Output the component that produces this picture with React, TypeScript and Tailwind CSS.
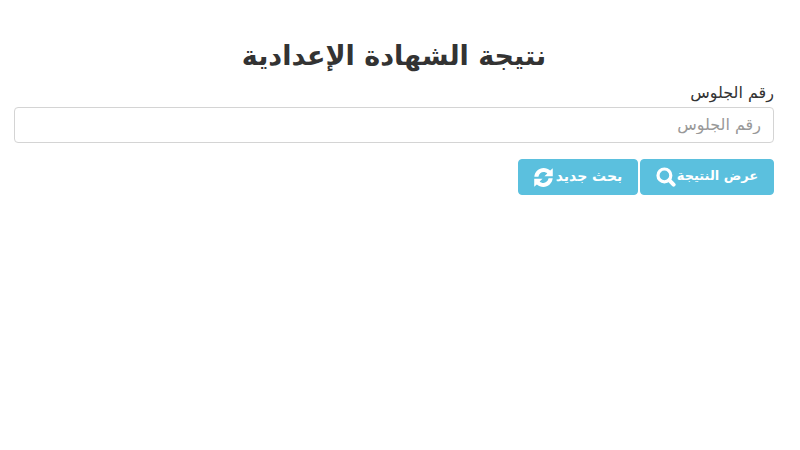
import React from "react";

function SearchIcon() {
  return (
    <svg viewBox="0 0 20 20" className="size-5 shrink-0" fill="none" stroke="currentColor" aria-hidden="true">
      <circle cx="8.4" cy="8.4" r="6.4" strokeWidth="3.2" />
      <path d="M13.2 13.2 L17.6 17.6" strokeWidth="4" strokeLinecap="round" />
    </svg>
  );
}

function RefreshIcon() {
  return (
    <svg viewBox="0 0 18 18" className="size-[19px] shrink-0" fill="currentColor" aria-hidden="true">
      <path d="M0.3 8.2C0.7 3.6 4.5 0 9.1 0C11.5 0 13.7 0.9 15.3 2.4L17.8 0.2V7.9H9.9L12.6 5.2C11.7 4.3 10.5 3.8 9.1 3.8C6.7 3.8 4.7 5.6 4.2 8.2Z" />
      <path d="M17.7 9.8C17.3 14.4 13.5 18 8.9 18C6.5 18 4.3 17.1 2.7 15.6L0.2 17.8V10.1H8.1L5.4 12.8C6.3 13.7 7.5 14.2 8.9 14.2C11.3 14.2 13.3 12.4 13.8 9.8Z" />
    </svg>
  );
}

const buttonClass =
  "flex h-9 items-center justify-center rounded border border-[#5bc0de] bg-[#5bc0de] px-[14px] leading-5 font-bold whitespace-nowrap text-white hover:bg-[#46b8da]";

export default function App() {
  return (
    <main
      dir="rtl"
      lang="ar"
      className="min-h-screen bg-white pt-9 pr-[26px] pl-[14px] font-['DejaVu_Sans',sans-serif] text-[#333333]"
    >
      <h1 className="text-center text-[27px] leading-10 font-bold">نتيجة الشهادة الإعدادية</h1>
      <form onSubmit={(event) => event.preventDefault()}>
        <label htmlFor="seat" className="mt-[7px] mb-1 block text-[16px] leading-5">
          رقم الجلوس
        </label>
        <input
          id="seat"
          type="text"
          placeholder="رقم الجلوس"
          className="block h-9 w-full rounded border border-[#d4d4d4] bg-white px-3 pb-0.5 text-[16px] leading-5 outline-none placeholder:text-[#999999] focus:border-[#66afe9]"
        />
        <div className="mt-4 flex gap-[2px]">
          <button type="submit" className={`${buttonClass} min-w-[134px] gap-px text-[13px]`}>
            <span className="pb-0.5">عرض النتيجة</span>
            <SearchIcon />
          </button>
          <button type="reset" className={`${buttonClass} min-w-[120px] gap-[3px] text-[14px]`}>
            <span className="pb-0.5">بحث جديد</span>
            <RefreshIcon />
          </button>
        </div>
      </form>
    </main>
  );
}
